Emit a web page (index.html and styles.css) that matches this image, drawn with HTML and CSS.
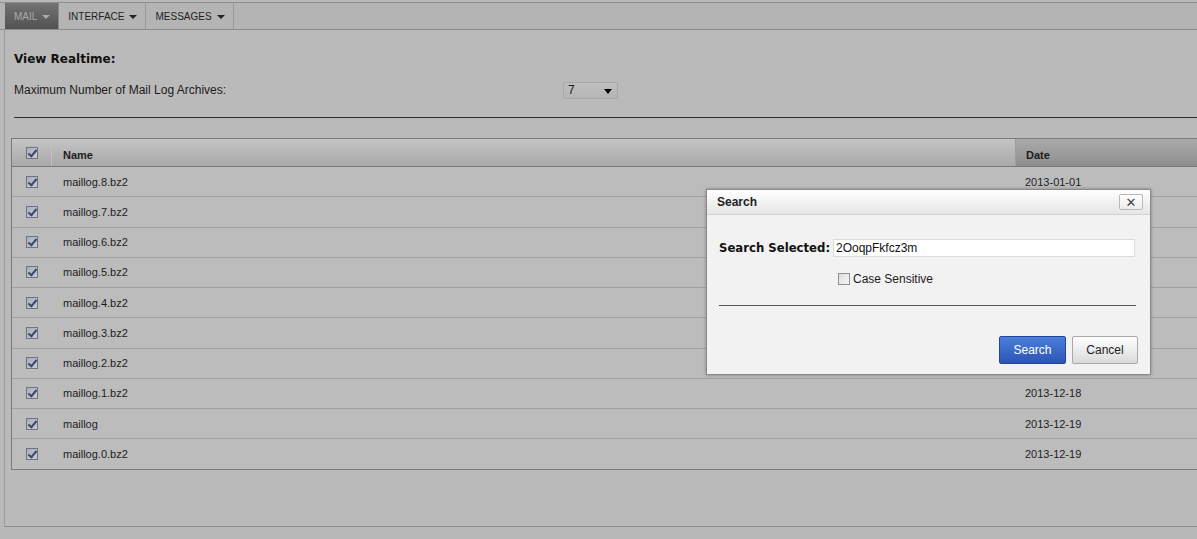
FILE: index.html
```html
<!DOCTYPE html>
<html lang="en">
<head>
  <meta charset="UTF-8">
  <title>Mail Logs</title>
  <link rel="stylesheet" href="styles.css">
</head>
<body>

  <div class="topbar">
    <div class="tab active">MAIL <span class="caret"></span></div>
    <div class="tab">INTERFACE <span class="caret"></span></div>
    <div class="tab">MESSAGES <span class="caret"></span></div>
  </div>

  <div class="panel">
    <h2 class="view-title">View Realtime:</h2>
    <div class="option-row">
      <span class="option-label">Maximum Number of Mail Log Archives:</span>
      <div class="select">7 <span class="select-arrow"></span></div>
    </div>
    <hr class="rule">

    <div class="grid">
      <div class="grid-head">
        <div class="cell cell-check"><span class="cb checked"></span></div>
        <div class="cell cell-name">Name</div>
        <div class="cell cell-date sorted">Date</div>
      </div>
      <div class="grid-row"><div class="cell cell-check"><span class="cb checked"></span></div><div class="cell cell-name">maillog.8.bz2</div><div class="cell cell-date">2013-01-01</div></div>
      <div class="grid-row"><div class="cell cell-check"><span class="cb checked"></span></div><div class="cell cell-name">maillog.7.bz2</div><div class="cell cell-date"></div></div>
      <div class="grid-row"><div class="cell cell-check"><span class="cb checked"></span></div><div class="cell cell-name">maillog.6.bz2</div><div class="cell cell-date"></div></div>
      <div class="grid-row"><div class="cell cell-check"><span class="cb checked"></span></div><div class="cell cell-name">maillog.5.bz2</div><div class="cell cell-date"></div></div>
      <div class="grid-row"><div class="cell cell-check"><span class="cb checked"></span></div><div class="cell cell-name">maillog.4.bz2</div><div class="cell cell-date"></div></div>
      <div class="grid-row"><div class="cell cell-check"><span class="cb checked"></span></div><div class="cell cell-name">maillog.3.bz2</div><div class="cell cell-date"></div></div>
      <div class="grid-row"><div class="cell cell-check"><span class="cb checked"></span></div><div class="cell cell-name">maillog.2.bz2</div><div class="cell cell-date"></div></div>
      <div class="grid-row"><div class="cell cell-check"><span class="cb checked"></span></div><div class="cell cell-name">maillog.1.bz2</div><div class="cell cell-date">2013-12-18</div></div>
      <div class="grid-row"><div class="cell cell-check"><span class="cb checked"></span></div><div class="cell cell-name">maillog</div><div class="cell cell-date">2013-12-19</div></div>
      <div class="grid-row"><div class="cell cell-check"><span class="cb checked"></span></div><div class="cell cell-name">maillog.0.bz2</div><div class="cell cell-date">2013-12-19</div></div>
    </div>
  </div>

  <div class="dialog">
    <div class="dialog-title">
      <span>Search</span>
      <button class="dialog-close">&#x2715;</button>
    </div>
    <div class="dialog-body">
      <div class="search-row">
        <label class="search-label">Search Selected:</label>
        <div class="search-input">2OoqpFkfcz3m</div>
      </div>
      <div class="case-row">
        <span class="cb plain"></span>
        <span>Case Sensitive</span>
      </div>
      <hr class="dialog-rule">
      <div class="dialog-buttons">
        <button class="btn btn-primary">Search</button>
        <button class="btn">Cancel</button>
      </div>
    </div>
  </div>

</body>
</html>
```

FILE: styles.css
```css
:root {
  --page: #b9b9b9;
  --line: #8c8c8c;
  --row: #bcbcbc;
  --text: #1c1c1c;
}
body {
  margin: 0;
  font-family: 'Liberation Sans', Arial, sans-serif;
  background: var(--page);
  color: var(--text);
  overflow: hidden;
  height: 539px;
}

/* top navigation */
.topbar {
  margin-top: 2px;
  height: 26px;
  border-top: 1px solid var(--line);
  border-bottom: 1px solid var(--line);
  background: #b4b4b4;
  display: flex;
  padding-left: 5px;
}
.tab {
  display: flex;
  align-items: center;
  gap: 5px;
  padding: 0 8px 0 9px;
  font-size: 10px;
  color: #222;
  border-right: 1px solid #9a9a9a;
}
.tab.active {
  background: linear-gradient(#727272, #525252);
  color: #a9a9a9;
  border-right-color: #8a8a8a;
}
.caret {
  width: 0;
  height: 0;
  border-left: 4px solid transparent;
  border-right: 4px solid transparent;
  border-top: 4px solid #222;
  margin-top: 1px;
}
.tab.active .caret { border-top-color: #a9a9a9; }

/* main panel */
.panel {
  margin-left: 4px;
  height: 496px;
  border-left: 1px solid #9c9c9c;
  border-bottom: 1px solid #8f8f8f;
  background: #bababa;
  padding-left: 6px;
}
.view-title {
  margin: 0 0 0 3px;
  padding-top: 21px;
  font-family: 'DejaVu Sans', Verdana, sans-serif;
  font-size: 12px;
  line-height: 16px;
  color: #111;
}
.option-row {
  display: grid;
  grid-template-columns: 549px auto;
  align-items: center;
  margin: 14px 0 0 3px;
  height: 18px;
  font-size: 12px;
}
.select {
  width: 44px;
  height: 15px;
  padding: 0 5px 0 4px;
  border: 1px solid #a8a8a8;
  border-radius: 2px;
  background: linear-gradient(#bebebe, #b6b6b6);
  display: flex;
  align-items: center;
  justify-content: space-between;
  font-size: 12px;
}
.select-arrow {
  width: 0;
  height: 0;
  border-left: 4px solid transparent;
  border-right: 4px solid transparent;
  border-top: 5px solid #000;
  margin-top: 2px;
}
.rule {
  margin: 18px 0 0 3px;
  border: 0;
  border-top: 1px solid #2e2e2e;
  height: 0;
}

/* file grid */
.grid {
  margin-top: 20px;
  width: 1240px;
  border: 1px solid #7c7c7c;
  border-right: 0;
  font-size: 11px;
}
.grid-head, .grid-row {
  display: grid;
  grid-template-columns: 40px 963px 1fr;
}
.grid-head {
  height: 27px;
  border-bottom: 1px solid #7a7a7a;
  background: linear-gradient(#c4c4c4, #b3b3b3 60%, #a9a9a9);
  font-weight: bold;
}
.grid-head .cell { padding-top: 5px; }
.grid-row {
  height: 29.25px;
  background: var(--row);
  border-bottom: 1px solid #a0a0a0;
}
.grid-row:last-child { border-bottom: 0; height: 30px; }
.cell {
  display: flex;
  align-items: center;
}
.cell-check { justify-content: center; }
.grid-head .cell-check { border-right: 1px solid #c2c2c2; padding-top: 0; }
.cell-name { padding-left: 11px; }
.cell-date { padding-left: 10px; }
.sorted {
  background: linear-gradient(#a9a9a9, #9a9a9a 60%, #8e8e8e);
  border-left: 1px solid #9c9c9c;
}

/* checkboxes */
.cb {
  display: inline-block;
  width: 10px;
  height: 10px;
  border: 1px solid #6d7584;
  background: linear-gradient(135deg, #a9aeb8, #c8cbd1);
  position: relative;
}
.cb.checked::after {
  content: "";
  position: absolute;
  left: 3px;
  top: 0;
  width: 3px;
  height: 7px;
  border-right: 2px solid #3a4870;
  border-bottom: 2px solid #3a4870;
  transform: rotate(40deg);
}
.cb.plain {
  border-color: #8f8f8f;
  background: linear-gradient(135deg, #dcdcdc, #f6f6f6);
}

/* search dialog */
.dialog {
  position: absolute;
  left: 706px;
  top: 189px;
  width: 443px;
  border: 1px solid #8a8a8a;
  background: #f2f2f2;
  box-shadow: 0 0 3px rgba(0, 0, 0, 0.35);
}
.dialog-title {
  height: 24px;
  display: flex;
  align-items: center;
  justify-content: space-between;
  padding: 0 7px 0 10px;
  background: linear-gradient(#ffffff, #e5e5e5);
  border-bottom: 1px solid #d2d2d2;
  font-size: 12px;
  font-weight: bold;
  color: #222;
}
.dialog-close {
  width: 24px;
  height: 16px;
  padding: 0;
  border: 1px solid #b8b8b8;
  border-radius: 2px;
  background: linear-gradient(#ffffff, #ededed);
  color: #444;
  font-size: 13px;
  font-weight: bold;
  line-height: 13px;
  font-family: 'DejaVu Sans', sans-serif;
}
.dialog-body {
  padding: 0 12px 10px 12px;
}
.search-row {
  display: flex;
  align-items: center;
  margin-top: 23px;
  height: 19px;
}
.search-label {
  font-family: 'DejaVu Sans', Verdana, sans-serif;
  font-weight: bold;
  font-size: 11.7px;
  color: #111;
  width: 114px;
}
.search-input {
  width: 298px;
  height: 16px;
  border: 1px solid #dcdcdc;
  background: #fff;
  font-size: 12px;
  line-height: 16px;
  padding-left: 2px;
  color: #111;
}
.case-row {
  display: flex;
  align-items: center;
  gap: 3px;
  margin: 13px 0 0 119px;
  height: 18px;
  font-size: 12px;
}
.dialog-rule {
  margin: 17px 2px 0 0;
  border: 0;
  border-top: 1px solid #555;
  height: 0;
}
.dialog-buttons {
  display: flex;
  justify-content: flex-end;
  gap: 6px;
  margin-top: 30px;
}
.btn {
  width: 66px;
  height: 28px;
  border: 1px solid #a8a8a8;
  border-radius: 2px;
  background: linear-gradient(#ffffff, #dadada);
  font-family: 'Liberation Sans', Arial, sans-serif;
  font-size: 12px;
  color: #222;
  padding: 0;
}
.btn-primary {
  width: 67px;
  border-color: #23449b;
  background: linear-gradient(#4b7fdc, #2b55b5);
  color: #fff;
}
```
